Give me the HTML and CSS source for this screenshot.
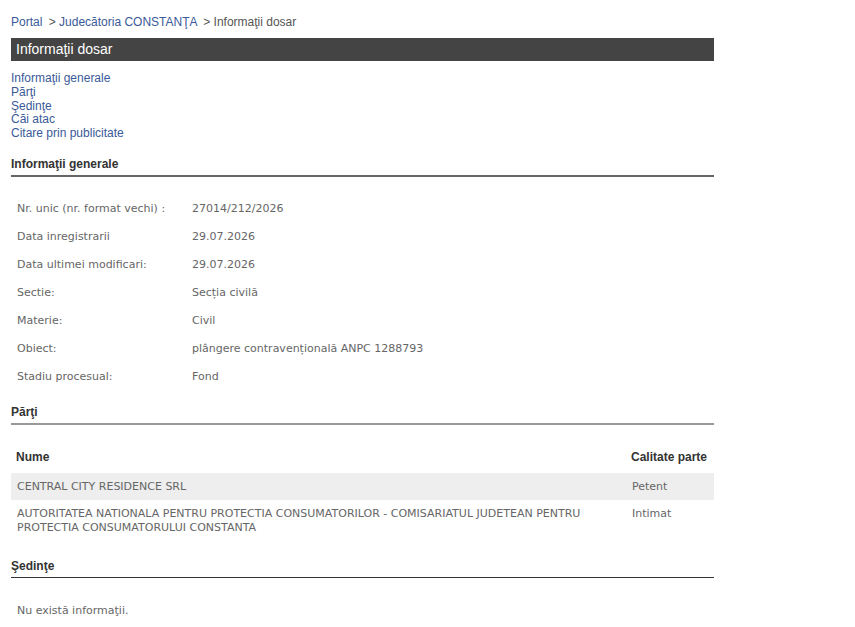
FILE: index.html
```html
<!DOCTYPE html>
<html lang="ro">
<head>
  <meta charset="UTF-8">
  <title>Informaţii dosar</title>
  <link rel="stylesheet" href="styles.css">
</head>
<body>
  <div class="page">
    <div class="crumbs">
      <a href="#">Portal</a> <span class="sep">&gt;</span> <a href="#">Judecătoria CONSTANŢA</a> <span class="sep">&gt; Informaţii dosar</span>
    </div>

    <div class="bar">Informaţii dosar</div>

    <ul class="toc">
      <li><a href="#gen">Informaţii generale</a></li>
      <li><a href="#parti">Părţi</a></li>
      <li><a href="#sed">Şedinţe</a></li>
      <li><a href="#cai">Căi atac</a></li>
      <li><a href="#cit">Citare prin publicitate</a></li>
    </ul>

    <h3 id="gen" class="sect sect-gen">Informaţii generale</h3>
    <table class="info">
      <tr><td class="lbl">Nr. unic (nr. format vechi) :</td><td>27014/212/2026</td></tr>
      <tr><td class="lbl">Data inregistrarii</td><td>29.07.2026</td></tr>
      <tr><td class="lbl">Data ultimei modificari:</td><td>29.07.2026</td></tr>
      <tr><td class="lbl">Sectie:</td><td>Secția civilă</td></tr>
      <tr><td class="lbl">Materie:</td><td>Civil</td></tr>
      <tr><td class="lbl">Obiect:</td><td>plângere contravențională ANPC 1288793</td></tr>
      <tr><td class="lbl">Stadiu procesual:</td><td>Fond</td></tr>
    </table>

    <h3 id="parti" class="sect sect-parti">Părţi</h3>
    <table class="parti">
      <tr><th>Nume</th><th class="cal">Calitate parte</th></tr>
      <tr class="alt"><td>CENTRAL CITY RESIDENCE SRL</td><td class="cal">Petent</td></tr>
      <tr><td>AUTORITATEA NATIONALA PENTRU PROTECTIA CONSUMATORILOR - COMISARIATUL JUDETEAN PENTRU PROTECTIA CONSUMATORULUI CONSTANTA</td><td class="cal">Intimat</td></tr>
    </table>

    <h3 id="sed" class="sect sect-sed">Şedinţe</h3>
    <p class="empty">Nu există informaţii.</p>
  </div>
</body>
</html>
```

FILE: styles.css
```css
body {
  margin: 0; padding: 0;
  background: #fff; color: #333;
  font-family: "Liberation Sans", Arial, sans-serif;
  font-size: 12px;
}
.page { width: 703px; margin-left: 11px; }
a { color: #3a5a99; text-decoration: none; }

.crumbs { padding-top: 14px; height: 16px; font-size: 12px; line-height: 16px; }
.crumbs .sep { color: #555; padding-left: 3px; }

.bar {
  margin-top: 8px; height: 23px; line-height: 23px;
  background: #444; color: #fff;
  font-size: 14px; padding-left: 5px;
}

.toc { list-style: none; margin: 11px 0 0; padding: 0; line-height: 13.75px; }

.sect {
  margin: 0; padding: 0 0 4px;
  font-size: 12px; font-weight: bold; color: #333;
}
.sect-gen { margin-top: 16px; border-bottom: 2px solid #666; }
.sect-parti { margin-top: 14px; border-bottom: 2px solid #999; }
.sect-sed { margin-top: 18px; border-bottom: 1px solid #333; }

.info, .parti {
  border-collapse: collapse;
  font-family: "DejaVu Sans", Verdana, sans-serif;
  font-size: 11px; color: #666;
}
.info { margin-top: 18px; }
.info td { height: 28px; padding: 0 6px; }
.info td.lbl { width: 163px; }

.parti { width: 100%; margin-top: 25px; }
.parti th {
  font-family: "Liberation Sans", Arial, sans-serif;
  font-size: 12px; color: #333; text-align: left;
  padding: 0 5px 9px;
}
.parti td { padding: 7px 6px 6px; vertical-align: top; line-height: 14px; }
.parti tr.alt td { background: #eee; }
.parti .cal { width: 76px; }

.empty {
  margin: 26px 0 0 6px;
  font-family: "DejaVu Sans", Verdana, sans-serif;
  font-size: 11px; color: #666;
}
```
